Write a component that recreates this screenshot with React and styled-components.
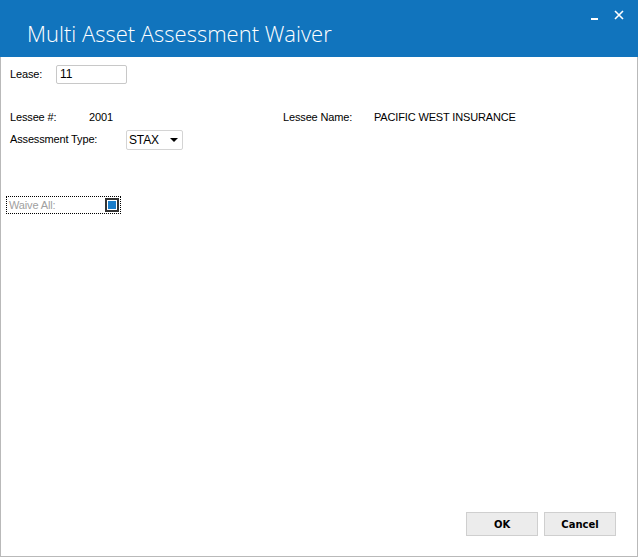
import React from "react";
import styled, { createGlobalStyle } from "styled-components";

const Global = createGlobalStyle`
  html, body { margin: 0; padding: 0; background: #fff; }
  body { font-family: "Liberation Sans", Arial, sans-serif; font-size: 11px; color: #000; }
`;

const Window = styled.div`
  width: 638px;
  height: 557px;
  box-sizing: border-box;
  display: flex;
  flex-direction: column;
  border: 1px solid #b9b9b9;
  border-top: none;
  background: #fff;
`;

const TitleBar = styled.div`
  height: 57px;
  margin: 0 -1px;
  background: #1174bd;
  display: flex;
  align-items: flex-start;
  justify-content: space-between;
  flex-shrink: 0;
`;

const Title = styled.div`
  font-family: "Open Sans", "Liberation Sans", sans-serif;
  font-weight: 300;
  font-size: 22px;
  color: #fff;
  padding: 18px 0 0 27px;
`;

const Controls = styled.div`
  display: flex;
  gap: 14px;
  padding: 10px 14px 0 0;
`;

const CtrlBtn = styled.svg`
  width: 10px;
  height: 10px;
`;

const Body = styled.div`
  flex: 1;
  display: flex;
  flex-direction: column;
  padding: 7px 0 0 9px;
  letter-spacing: -0.15px;
`;

const Row = styled.div`
  display: flex;
  align-items: center;
  height: ${(p) => p.h || 20}px;
  margin-top: ${(p) => p.mt || 0}px;
`;

const Label = styled.span`
  width: ${(p) => p.w}px;
  flex-shrink: 0;
`;

const Value = styled.span`
  width: ${(p) => p.w || "auto"}px;
  flex-shrink: 0;
`;

const TextBox = styled.div`
  width: 66px;
  height: 17px;
  border: 1px solid #c8c8c8;
  border-radius: 2px;
  display: flex;
  align-items: center;
  padding-left: 3px;
  font-size: 12px;
`;

const Combo = styled.div`
  width: 57px;
  height: 20px;
  margin-top: 2px;
  border: 1px solid #d4d4d4;
  border-radius: 2px;
  display: flex;
  align-items: center;
  justify-content: space-between;
  padding: 0 4px 0 2px;
  box-sizing: border-box;
  font-size: 12px;
`;

const Arrow = styled.span`
  width: 0;
  height: 0;
  border-left: 4px solid transparent;
  border-right: 4px solid transparent;
  border-top: 4px solid #000;
`;

const WaiveBox = styled.div`
  margin: 1px 0 0 -4px;
  width: 115px;
  height: 18px;
  box-sizing: border-box;
  border: 1px dotted #000;
  display: flex;
  align-items: center;
  justify-content: space-between;
  padding: 0 1px 0 2px;
  color: #a0a0a0;
`;

const Check = styled.span`
  width: 14px;
  height: 14px;
  box-sizing: border-box;
  border: 2px solid #333;
  display: flex;
  padding: 1px;
  &::after {
    content: "";
    flex: 1;
    background: #1a7cc8;
  }
`;

const Footer = styled.div`
  display: flex;
  justify-content: flex-end;
  gap: 6px;
  padding: 0 21px 20px 0;
`;

const Button = styled.button`
  width: 72px;
  height: 24px;
  border: 1px solid #cfcfcf;
  background: #ececec;
  font-family: "DejaVu Sans", Tahoma, sans-serif;
  font-weight: bold;
  font-size: 10px;
  color: #000;
  padding: 0;
`;

export default function App() {
  return (
    <>
      <Global />
      <Window>
        <TitleBar>
          <Title>Multi Asset Assessment Waiver</Title>
          <Controls>
            <CtrlBtn viewBox="0 0 10 10">
              <rect x="1" y="8" width="7" height="2" fill="#fff" />
            </CtrlBtn>
            <CtrlBtn viewBox="0 0 10 10">
              <path d="M1 1 L9 9 M9 1 L1 9" stroke="#fff" strokeWidth="1.6" />
            </CtrlBtn>
          </Controls>
        </TitleBar>
        <Body>
          <Row>
            <Label w={46}>Lease:</Label>
            <TextBox>11</TextBox>
          </Row>
          <Row mt={23}>
            <Label w={79}>Lessee #:</Label>
            <Value w={194}>2001</Value>
            <Label w={91}>Lessee Name:</Label>
            <Value>PACIFIC WEST INSURANCE</Value>
          </Row>
          <Row mt={2}>
            <Label w={116}>Assessment Type:</Label>
            <Combo>
              STAX
              <Arrow />
            </Combo>
          </Row>
          <Row mt={45}>
            <WaiveBox>
              Waive All:
              <Check />
            </WaiveBox>
          </Row>
        </Body>
        <Footer>
          <Button>OK</Button>
          <Button>Cancel</Button>
        </Footer>
      </Window>
    </>
  );
}
